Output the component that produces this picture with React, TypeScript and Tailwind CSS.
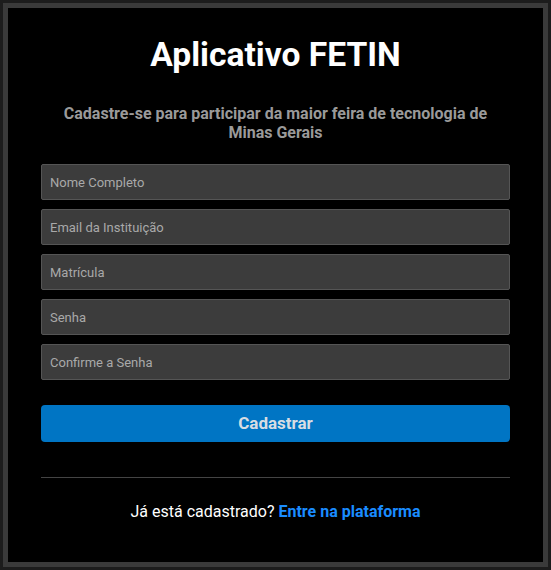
export default function App() {
    const fields = ["Nome Completo", "Email da Instituição", "Matrícula", "Senha", "Confirme a Senha"]

    return (
        <div className="w-[551px] h-[570px] bg-[#1c1c1c] p-[3px]" style={{ fontFamily: "Roboto, sans-serif" }}>
            <div className="h-full bg-black border-[5px] border-[#3a3a3a] flex flex-col items-center px-[33px]">

                {/* titulo */}
                <h1 className="mt-[28px] text-[33.6px] leading-[38px] font-bold text-white">Aplicativo FETIN</h1>

                <p className="mt-[30px] text-center text-[16px] leading-[19px] font-bold text-[#9a9a9a] px-[15px]">
                    Cadastre-se para participar da maior feira de tecnologia de Minas Gerais
                </p>

                {/* formulario */}
                <form className="w-full flex flex-col gap-[9px] mt-[22px]">
                    {fields.map((f) => (
                        <input
                            key={f}
                            type="text"
                            placeholder={f}
                            className="h-[36px] w-full bg-[#3c3c3c] border border-[#555] rounded-[2px] px-[8px] text-[13px] text-white placeholder:text-[#a9a9a9] outline-none"
                        />
                    ))}

                    <button
                        type="button"
                        className="mt-[16px] h-[37px] w-full bg-[#0075c4] rounded-[4px] text-[17px] font-bold text-[#d7dde3]"
                    >
                        Cadastrar
                    </button>
                </form>

                <div className="w-full h-px bg-[#444] mt-[35px]" />

                <p className="mt-[22px] text-[16px] text-white">
                    Já está cadastrado? <a href="#" className="font-bold text-[#1a8cff]">Entre na plataforma</a>
                </p>

            </div>
        </div>
    )
}
